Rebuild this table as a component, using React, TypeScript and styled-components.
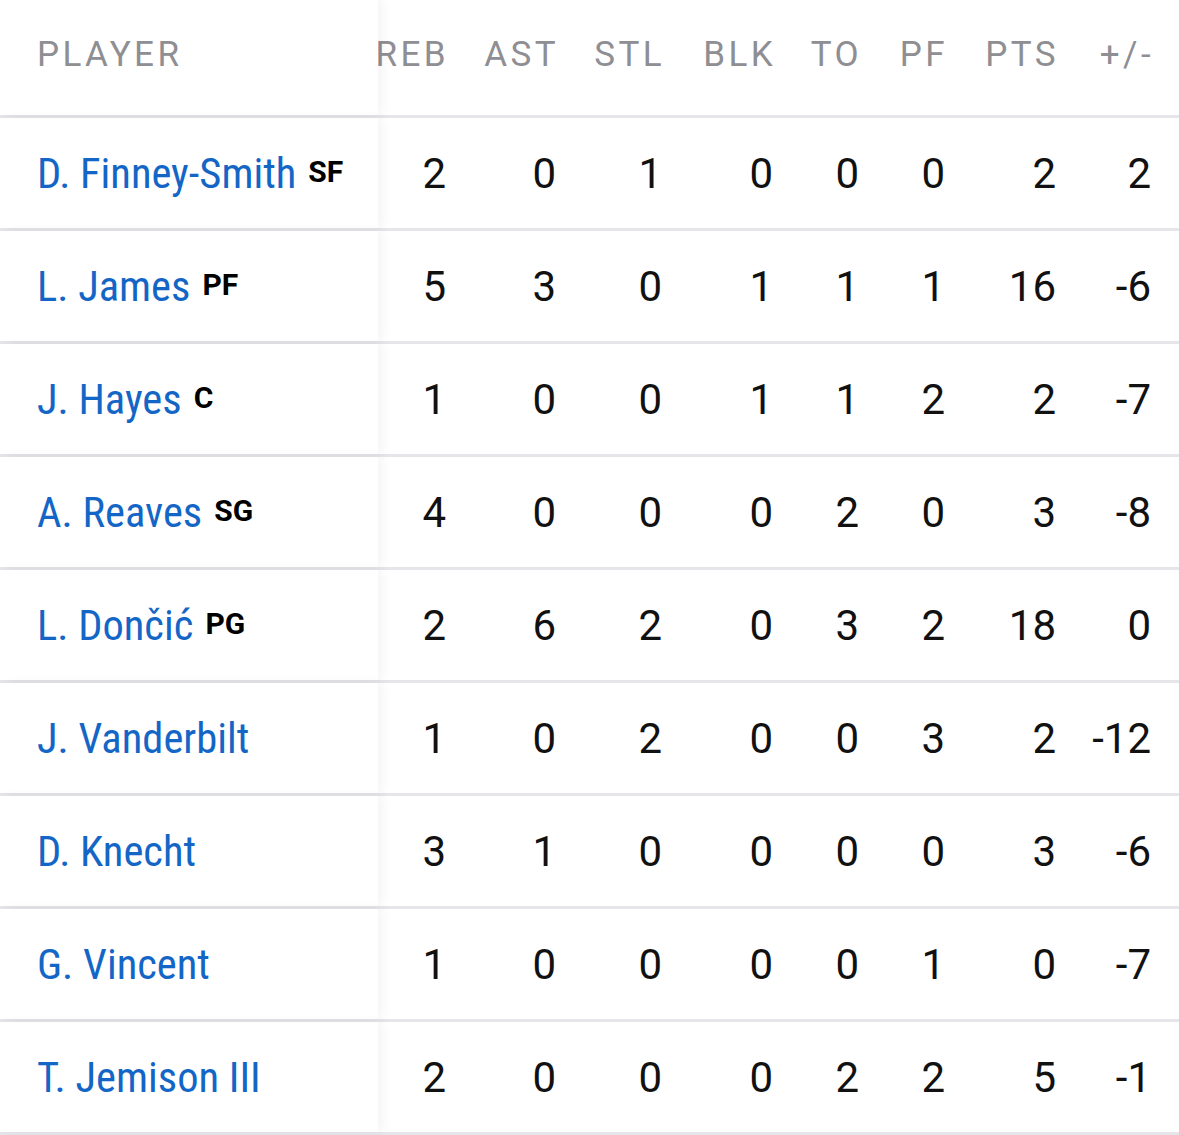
import React from "react";
import styled, { createGlobalStyle } from "styled-components";

const GlobalStyle = createGlobalStyle`
  html, body {
    margin: 0;
    padding: 0;
    background: #ffffff;
  }
  body {
    font-family: Roboto, "Liberation Sans", sans-serif;
    -webkit-font-smoothing: antialiased;
  }
`;

const Table = styled.div`
  width: 1179px;
  height: 1135px;
  overflow: hidden;
  background: #ffffff;
`;

const Row = styled.div<{ $head?: boolean }>`
  display: flex;
  height: ${(p) => (p.$head ? "115px" : "110px")};
  border-bottom: 3px solid #e6e6ea;
`;

const PlayerCell = styled.div`
  position: relative;
  z-index: 1;
  flex: 0 0 378px;
  height: 100%;
  display: flex;
  align-items: center;
  padding-left: 37px;
  box-sizing: border-box;
  background: #ffffff;
  box-shadow: 5px 0 10px rgba(0, 0, 0, 0.045);
`;

const StatCell = styled.div<{ $w: number }>`
  flex: 0 0 ${(p) => p.$w}px;
  height: 100%;
  display: flex;
  align-items: center;
  justify-content: flex-end;
  overflow: hidden;
  white-space: nowrap;
`;

const HeadLabel = styled.span`
  font-family: Roboto, "Liberation Sans", sans-serif;
  font-size: 35px;
  font-weight: 400;
  letter-spacing: 3.4px;
  color: #8e8e93;
  margin-top: -6px;
`;

const Name = styled.span`
  font-family: "Roboto Condensed", Roboto, "Liberation Sans Narrow", sans-serif;
  font-stretch: condensed;
  font-size: 42.5px;
  font-weight: 400;
  color: #1466c6;
  white-space: nowrap;
`;

const Pos = styled.span`
  font-family: Roboto, "Liberation Sans", sans-serif;
  font-size: 30px;
  font-weight: 700;
  color: #000000;
  margin-left: 12px;
  margin-top: -4px;
`;

const Value = styled.span`
  font-family: Roboto, "Liberation Sans", sans-serif;
  font-size: 42px;
  font-weight: 400;
  color: #111111;
`;

const Tail = styled.div`
  flex: 1 1 auto;
`;

const columns = [
  { key: "REB", w: 68 },
  { key: "AST", w: 110 },
  { key: "STL", w: 106 },
  { key: "BLK", w: 111 },
  { key: "TO", w: 86 },
  { key: "PF", w: 86 },
  { key: "PTS", w: 111 },
  { key: "+/-", w: 95 },
];

const players: { name: string; pos?: string; stats: (number | string)[] }[] = [
  { name: "D. Finney-Smith", pos: "SF", stats: [2, 0, 1, 0, 0, 0, 2, 2] },
  { name: "L. James", pos: "PF", stats: [5, 3, 0, 1, 1, 1, 16, -6] },
  { name: "J. Hayes", pos: "C", stats: [1, 0, 0, 1, 1, 2, 2, -7] },
  { name: "A. Reaves", pos: "SG", stats: [4, 0, 0, 0, 2, 0, 3, -8] },
  { name: "L. Dončić", pos: "PG", stats: [2, 6, 2, 0, 3, 2, 18, 0] },
  { name: "J. Vanderbilt", stats: [1, 0, 2, 0, 0, 3, 2, -12] },
  { name: "D. Knecht", stats: [3, 1, 0, 0, 0, 0, 3, -6] },
  { name: "G. Vincent", stats: [1, 0, 0, 0, 0, 1, 0, -7] },
  { name: "T. Jemison III", stats: [2, 0, 0, 0, 2, 2, 5, -1] },
];

export default function App() {
  return (
    <>
      <GlobalStyle />
      <Table>
        <Row $head>
          <PlayerCell>
            <HeadLabel>PLAYER</HeadLabel>
          </PlayerCell>
          {/* trailing letter-spacing pushes labels left; offset the first column */}
          {columns.map((c, i) => (
            <StatCell key={c.key} $w={i === 0 ? c.w + 3 : c.w}>
              <HeadLabel>{c.key}</HeadLabel>
            </StatCell>
          ))}
          <Tail />
        </Row>
        {players.map((p) => (
          <Row key={p.name}>
            <PlayerCell>
              <Name>{p.name}</Name>
              {p.pos ? <Pos>{p.pos}</Pos> : null}
            </PlayerCell>
            {p.stats.map((v, i) => (
              <StatCell key={columns[i].key} $w={columns[i].w}>
                <Value>{v}</Value>
              </StatCell>
            ))}
            <Tail />
          </Row>
        ))}
      </Table>
    </>
  );
}
